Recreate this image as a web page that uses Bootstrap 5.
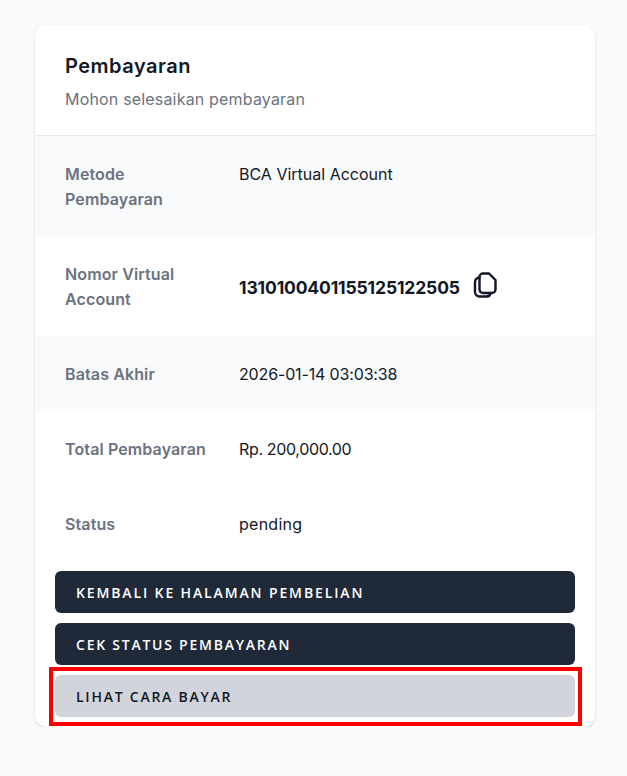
<!DOCTYPE html>
<html lang="en">
<head>
  <meta charset="UTF-8" />
  <meta name="viewport" content="width=device-width, initial-scale=1.0" />
  <title>Pembayaran</title>
  <link href="https://cdn.jsdelivr.net/npm/bootstrap@5.3.3/dist/css/bootstrap.min.css" rel="stylesheet">
  <style>
    body {
      background-color: #f9fafb;
      color: #111827;
      font-family: Inter, "Noto Sans", sans-serif;
      font-size: 16px;
    }

    .pay-wrap {
      width: 560px;
      margin: 25px 0 0 35px;
    }

    .pay-card {
      border: 0;
      border-radius: 12px;
      box-shadow: 0 1px 3px rgba(0, 0, 0, 0.1), 0 1px 2px rgba(0, 0, 0, 0.06);
    }

    .pay-head {
      padding: 27px 30px 0;
      height: 111px;
      border-bottom: 1px solid #e5e7eb;
    }

    .pay-title {
      font-size: 20px;
      line-height: 28px;
      font-weight: 600;
      letter-spacing: 0.5px;
      color: #111827;
      margin: 0 0 7px;
    }

    .pay-sub {
      font-size: 16px;
      line-height: 24px;
      letter-spacing: 0.18px;
      color: #6b7280;
      margin: 0;
    }

    .pay-row {
      padding: 26px 30px 24px;
      line-height: 25px;
      gap: 16px;
    }

    .pay-row.shaded {
      background-color: #f9fafb;
    }

    .pay-label {
      flex: 0 0 158px;
      font-weight: 600;
      letter-spacing: 0.12px;
      color: #6b7280;
    }

    .pay-number {
      font-size: 17.5px;
      font-weight: 700;
      letter-spacing: -0.14px;
    }

    .pay-date {
      letter-spacing: -0.15px;
    }

    .pay-amount {
      letter-spacing: -0.35px;
    }

    .pay-status {
      letter-spacing: 0.25px;
    }

    .pay-copy {
      margin: -4px 0 0 13px;
      color: #111827;
    }

    .pay-actions {
      padding: 10px 20px;
      gap: 10px;
    }

    .pay-btn {
      height: 42px;
      padding: 0 21px;
      border: 0;
      border-radius: 6px;
      text-align: left;
      font-family: "Open Sans", sans-serif;
      font-size: 14px;
      font-weight: 600;
      letter-spacing: 1.76px;
      text-transform: uppercase;
    }

    .pay-btn.wide {
      letter-spacing: 1.87px;
    }

    .pay-btn.dark {
      background-color: #1f2937;
      color: #fff;
    }

    .pay-btn.light {
      background-color: #d1d5db;
      color: #111827;
    }

    .pay-mark {
      position: absolute;
      top: -8px;
      right: -7px;
      bottom: -9px;
      left: -6px;
      border: 4px solid #ff0000;
      pointer-events: none;
    }
  </style>
</head>
<body>

  <div class="pay-wrap">
    <div class="card pay-card">
      <div class="pay-head">
        <h1 class="pay-title">Pembayaran</h1>
        <p class="pay-sub">Mohon selesaikan pembayaran</p>
      </div>

      <div class="d-flex pay-row shaded">
        <div class="pay-label">Metode Pembayaran</div>
        <div>BCA Virtual Account</div>
      </div>
      <div class="d-flex align-items-center pay-row">
        <div class="pay-label">Nomor Virtual Account</div>
        <div class="d-flex align-items-center">
          <span class="pay-number">1310100401155125122505</span>
          <svg class="pay-copy" width="24" height="26" viewBox="0 0 24 26" fill="none" stroke="currentColor" stroke-width="2.400" stroke-linejoin="round" stroke-linecap="round" aria-label="Salin">
            <path d="M6.500 5A3.500 3.500 0 0 1 10 1.500h6l6.500 6.500v9.500A3.500 3.500 0 0 1 19 21h-9a3.500 3.500 0 0 1-3.500-3.500z"/>
            <path d="M6.500 5.500A4.500 4.500 0 0 0 2 10v10a4.500 4.500 0 0 0 4.500 4.500h7a4 4 0 0 0 4-3.500"/>
          </svg>
        </div>
      </div>
      <div class="d-flex pay-row shaded">
        <div class="pay-label">Batas Akhir</div>
        <div class="pay-date">2026-01-14 03:03:38</div>
      </div>
      <div class="d-flex pay-row">
        <div class="pay-label">Total Pembayaran</div>
        <div class="pay-amount">Rp. 200,000.00</div>
      </div>
      <div class="d-flex pay-row">
        <div class="pay-label">Status</div>
        <div class="pay-status">pending</div>
      </div>

      <div class="d-flex flex-column pay-actions">
        <button type="button" class="btn pay-btn dark wide">Kembali ke Halaman Pembelian</button>
        <button type="button" class="btn pay-btn dark">Cek Status Pembayaran</button>
        <div class="position-relative d-flex flex-column">
          <button type="button" class="btn pay-btn light">Lihat Cara Bayar</button>
          <div class="pay-mark"></div>
        </div>
      </div>
    </div>
  </div>

  <script src="https://cdn.jsdelivr.net/npm/bootstrap@5.3.3/dist/js/bootstrap.bundle.min.js"></script>
</body>
</html>
